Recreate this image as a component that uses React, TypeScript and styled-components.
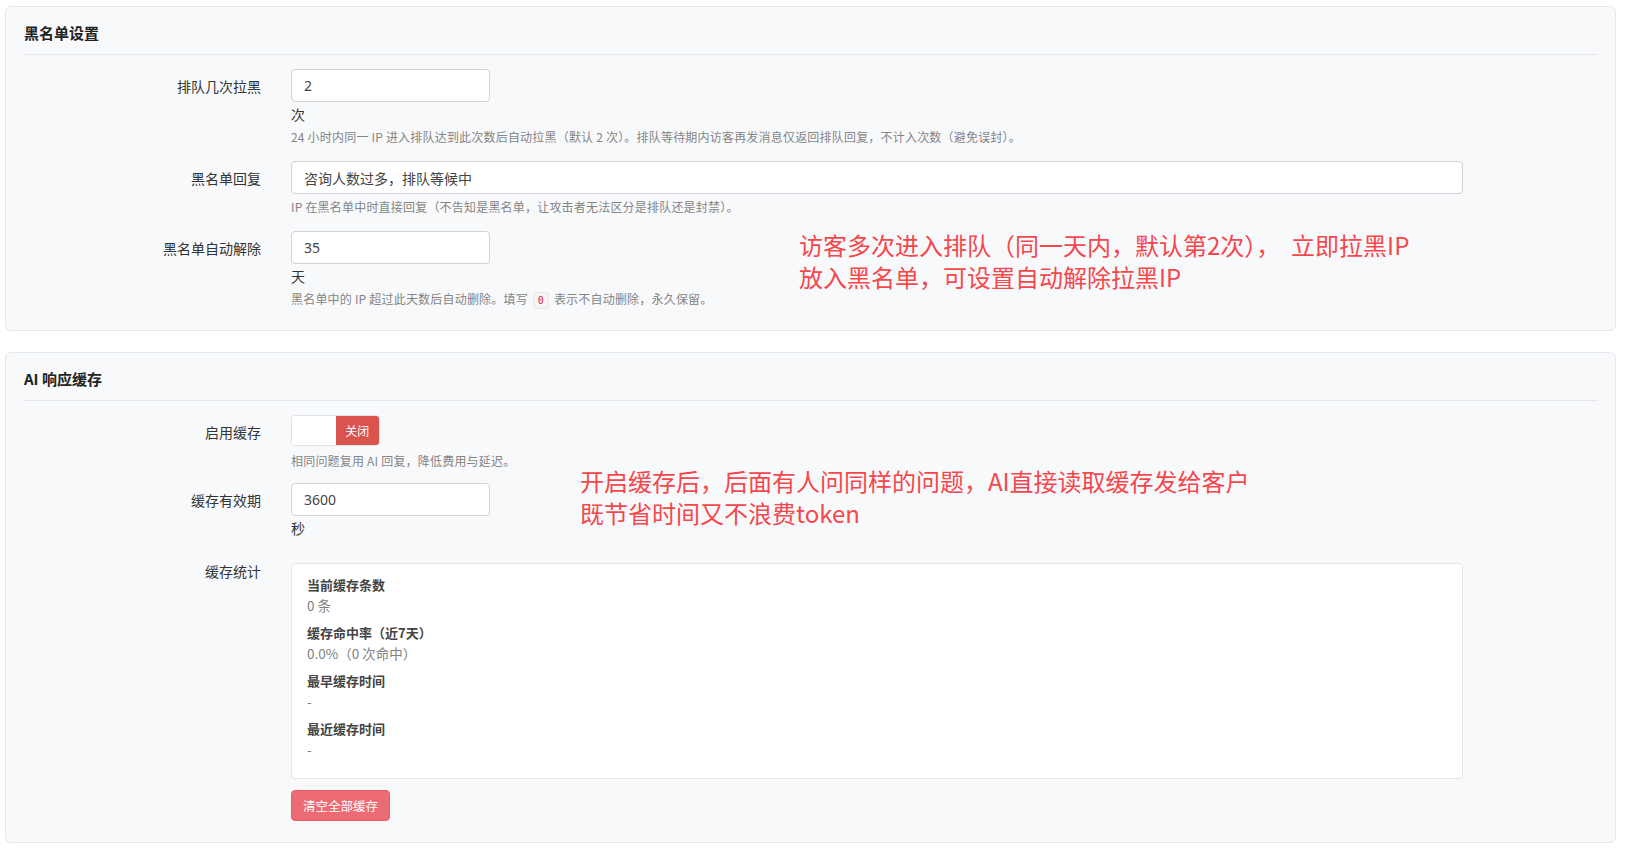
import React from "react";
import styled, { createGlobalStyle } from "styled-components";

const FONT = `"Noto Sans CJK SC", "Noto Sans", sans-serif`;
const FONT_LATIN = `"Noto Sans", "Noto Sans CJK SC", sans-serif`;

const GlobalStyle = createGlobalStyle`
  html, body {
    margin: 0;
    padding: 0;
    background: #ffffff;
    font-family: ${FONT};
    color: #333;
  }
  * { box-sizing: border-box; }
`;

const Page = styled.div`
  display: flex;
  flex-direction: column;
  gap: 21px;
  padding: 6px 17px 9px 5px;
`;

// Settings card
const Panel = styled.section`
  position: relative;
  background: #f8f9fb;
  border: 1px solid #e4e7ec;
  border-radius: 6px;
  padding: 0 17px;
`;

const PanelHeader = styled.div`
  padding: 15px 1px 10px;
  border-bottom: 1px solid #e3e6ea;
  font-size: 15px;
  line-height: 22px;
  font-weight: 700;
  color: #222;
`;

const PanelBody = styled.div<{ $bottom: number }>`
  padding: 14px 0 ${({ $bottom }) => $bottom}px;
`;

const FormRow = styled.div<{ $spacing?: number }>`
  display: grid;
  grid-template-columns: 238px minmax(0, 1172px);
  column-gap: 30px;
  align-items: start;
  margin-bottom: ${({ $spacing }) => ($spacing ?? 15)}px;
  &:last-child {
    margin-bottom: 0;
  }
`;

const Label = styled.label<{ $top?: number }>`
  text-align: right;
  font-size: 14px;
  line-height: 20px;
  padding-top: ${({ $top }) => ($top ?? 7)}px;
  color: #333;
`;

const Field = styled.div`
  display: flex;
  flex-direction: column;
  align-items: flex-start;
`;

const Input = styled.input<{ $wide?: boolean }>`
  width: ${({ $wide }) => ($wide ? "100%" : "199px")};
  height: 33px;
  padding: 0 12px;
  border: 1px solid #cfd2d6;
  border-radius: 4px;
  background: #fff;
  font-family: ${FONT_LATIN};
  font-size: 14px;
  color: #444;
  outline: none;
`;

const Unit = styled.span`
  margin-top: 2px;
  font-size: 14px;
  line-height: 20px;
  color: #333;
`;

const Help = styled.p<{ $top?: number }>`
  margin: ${({ $top }) => ($top ?? 4)}px 0 0;
  font-size: 12px;
  line-height: 18px;
  letter-spacing: 0.2px;
  color: #858585;
`;

const Code = styled.code`
  display: inline-block;
  padding: 0 4px;
  margin: 0 2px;
  font-family: "DejaVu Sans Mono", monospace;
  font-size: 10px;
  line-height: 15px;
  color: #c7254e;
  background: #f9f2f4;
  border: 1px solid #ece4e7;
  border-radius: 4px;
`;

// On/off toggle (currently off)
const Toggle = styled.div`
  display: flex;
  width: 89px;
  height: 31px;
  border: 1px solid #dfe2e6;
  border-radius: 4px;
  overflow: hidden;
  background: #fff;
`;

const ToggleHalf = styled.span<{ $off?: boolean }>`
  flex: 1;
  display: flex;
  align-items: center;
  justify-content: center;
  font-size: 12px;
  color: #fff;
  background: ${({ $off }) => ($off ? "#d9534f" : "#fff")};
`;

const StatsBox = styled.div`
  width: 100%;
  margin-top: 10px;
  padding: 11px 15px 11px;
  background: #fff;
  border: 1px solid #e3e6ea;
  border-radius: 4px;
`;

const StatItem = styled.div`
  margin-bottom: 8px;
  font-size: 13px;
  line-height: 20px;
`;

const StatTitle = styled.div`
  font-weight: 700;
  color: #444;
`;

const StatValue = styled.div`
  font-size: 13.5px;
  color: #808080;
`;

const DangerButton = styled.button`
  margin-top: 11px;
  height: 31px;
  padding: 0 11px;
  border: 1px solid #e5606a;
  border-radius: 4px;
  background: #ec6b74;
  color: #fff;
  font-family: ${FONT};
  font-size: 12.5px;
  cursor: pointer;
`;

// Red note drawn over the screenshot
const Annotation = styled.div<{ $left: number; $top: number }>`
  position: absolute;
  left: ${({ $left }) => $left}px;
  top: ${({ $top }) => $top}px;
  font-size: 24px;
  line-height: 32px;
  color: #f5474c;
  white-space: nowrap;
  pointer-events: none;
`;

const stats = [
  { title: "当前缓存条数", value: "0 条" },
  { title: "缓存命中率（近7天）", value: "0.0%（0 次命中）" },
  { title: "最早缓存时间", value: "-" },
  { title: "最近缓存时间", value: "-" },
];

export default function App() {
  return (
    <>
      <GlobalStyle />
      <Page>
        <Panel>
          <PanelHeader>黑名单设置</PanelHeader>
          <PanelBody $bottom={21}>
            <FormRow>
              <Label>排队几次拉黑</Label>
              <Field>
                <Input defaultValue="2" />
                <Unit>次</Unit>
                <Help>
                  24 小时内同一 IP 进入排队达到此次数后自动拉黑（默认 2 次）。排队等待期内访客再发消息仅返回排队回复，不计入次数（避免误封）。
                </Help>
              </Field>
            </FormRow>
            <FormRow>
              <Label>黑名单回复</Label>
              <Field>
                <Input $wide defaultValue="咨询人数过多，排队等候中" />
                <Help>IP 在黑名单中时直接回复（不告知是黑名单，让攻击者无法区分是排队还是封禁）。</Help>
              </Field>
            </FormRow>
            <FormRow>
              <Label>黑名单自动解除</Label>
              <Field>
                <Input defaultValue="35" />
                <Unit>天</Unit>
                <Help>
                  黑名单中的 IP 超过此天数后自动删除。填写 <Code>0</Code> 表示不自动删除，永久保留。
                </Help>
              </Field>
            </FormRow>
          </PanelBody>
          <Annotation $left={793} $top={222}>
            访客多次进入排队（同一天内，默认第2次），{"\u00a0\u00a0"}立即拉黑IP
            <br />
            放入黑名单，可设置自动解除拉黑IP
          </Annotation>
        </Panel>

        <Panel>
          <PanelHeader>AI 响应缓存</PanelHeader>
          <PanelBody $bottom={21}>
            <FormRow $spacing={13}>
              <Label>启用缓存</Label>
              <Field>
                <Toggle>
                  <ToggleHalf />
                  <ToggleHalf $off>关闭</ToggleHalf>
                </Toggle>
                <Help $top={6}>相同问题复用 AI 回复，降低费用与延迟。</Help>
              </Field>
            </FormRow>
            <FormRow>
              <Label>缓存有效期</Label>
              <Field>
                <Input defaultValue="3600" />
                <Unit>秒</Unit>
              </Field>
            </FormRow>
            <FormRow>
              <Label $top={8}>缓存统计</Label>
              <Field>
                <StatsBox>
                  {stats.map((s) => (
                    <StatItem key={s.title}>
                      <StatTitle>{s.title}</StatTitle>
                      <StatValue>{s.value}</StatValue>
                    </StatItem>
                  ))}
                </StatsBox>
                <DangerButton>清空全部缓存</DangerButton>
              </Field>
            </FormRow>
          </PanelBody>
          <Annotation $left={574} $top={112}>
            开启缓存后，后面有人问同样的问题，AI直接读取缓存发给客户
            <br />
            既节省时间又不浪费token
          </Annotation>
        </Panel>
      </Page>
    </>
  );
}
